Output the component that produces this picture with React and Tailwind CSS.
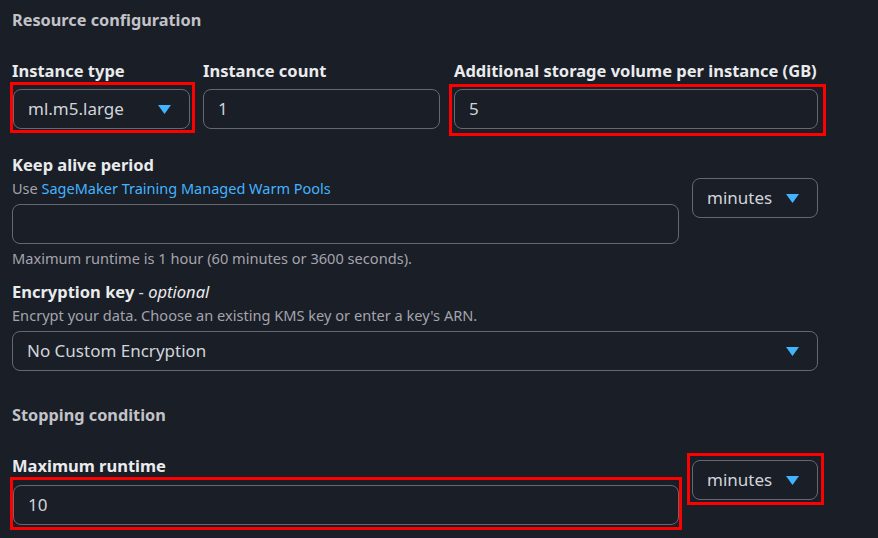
const Caret = () => (
  <svg width="13" height="9" viewBox="0 0 13 9" className="shrink-0">
    <path d="M0 0h13L6.5 9z" fill="#42b4ff" />
  </svg>
);

// red annotation frame drawn over a field
const Mark = ({ className }) => (
  <div
    className={`pointer-events-none absolute border-[3px] border-[#ff0000] ${className}`}
  />
);

const Select = ({ value, className = "" }) => (
  <div
    className={`flex h-10 items-center justify-between rounded-lg border border-[#656871] pl-[14px] pr-[18px] text-[17px] text-[#d1d5db] ${className}`}
  >
    <span>{value}</span>
    <Caret />
  </div>
);

const Input = ({ value, className = "" }) => (
  <div
    className={`flex h-10 items-center rounded-lg border border-[#656871] pl-[14px] text-[17px] text-[#d1d5db] ${className}`}
  >
    {value}
  </div>
);

const Label = ({ children }) => (
  <div className="text-[16.5px] leading-[22px] font-bold text-[#e9ebed]">
    {children}
  </div>
);

const App = () => {
  return (
    <div
      className="h-[538px] w-[878px] overflow-hidden bg-[#1a1e26] pl-3 pt-2"
      style={{ fontFamily: '"Noto Sans", "Open Sans", sans-serif' }}
    >
      <h2 className="text-[16.3px] leading-6 font-bold text-[#c2c3c9]">
        Resource configuration
      </h2>

      {/* row 1 */}
      <div className="mt-[28px] flex">
        <div className="relative w-[178px]">
          <Label>Instance type</Label>
          <Select value="ml.m5.large" className="mt-[7px] ml-px" />
          <Mark className="-left-[2px] top-[22px] h-[51px] w-[185px]" />
        </div>
        <div className="ml-[13px] w-[237px]">
          <Label>Instance count</Label>
          <Input value="1" className="mt-[7px]" />
        </div>
        <div className="relative ml-[14px] w-[364px]">
          <Label>Additional storage volume per instance (GB)</Label>
          <Input value="5" className="mt-[7px]" />
          <Mark className="-left-[5px] top-[24px] h-[52px] w-[377px]" />
        </div>
      </div>

      {/* keep alive */}
      <div className="mt-[25px] flex">
        <div className="w-[667px]">
          <Label>Keep alive period</Label>
          <div className="mt-0.5 text-[14.5px] leading-5 text-[#a4a4ad]">
            Use{" "}
            <span className="text-[#42b4ff]">
              SageMaker Training Managed Warm Pools
            </span>
          </div>
          <Input value="" className="mt-1.5" />
          <div className="mt-1 text-[14.6px] leading-5 text-[#a4a4ad]">
            Maximum runtime is 1 hour (60 minutes or 3600 seconds).
          </div>
        </div>
        <Select value="minutes" className="ml-[13px] mt-[24px] w-[126px]" />
      </div>

      {/* encryption */}
      <div className="mt-[13px] w-[806px]">
        <Label>
          Encryption key <span className="font-normal text-[#d1d5db]">-</span>{" "}
          <i className="font-normal">optional</i>
        </Label>
        <div className="mt-0.5 text-[14.6px] leading-5 text-[#a4a4ad]">
          Encrypt your data. Choose an existing KMS key or enter a key's ARN.
        </div>
        <Select value="No Custom Encryption" className="mt-1.5" />
      </div>

      <h2 className="mt-[32px] text-[16.3px] leading-6 font-bold text-[#c2c3c9]">
        Stopping condition
      </h2>

      {/* max runtime */}
      <div className="mt-[28px] flex">
        <div className="relative w-[667px]">
          <Label>Maximum runtime</Label>
          <Input value="10" className="mt-2 ml-px" />
          <Mark className="-left-[2px] top-[22px] h-[53px] w-[672px]" />
        </div>
        <div className="relative ml-[13px] mt-[5px]">
          <Select value="minutes" className="w-[126px]" />
          <Mark className="-left-[5px] -top-[7px] h-[52px] w-[137px]" />
        </div>
      </div>
    </div>
  );
};

export default App;
